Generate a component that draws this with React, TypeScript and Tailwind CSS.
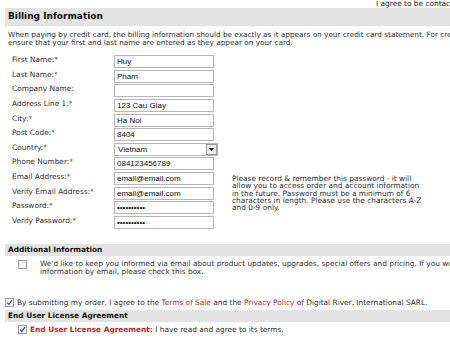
import type { ReactNode } from 'react';

const FONT = "font-['DejaVu_Sans',Verdana,sans-serif]";
const INPUT_FONT = "font-['Liberation_Sans',Arial,sans-serif]";

type Field = { label: string; value?: string; kind?: 'text' | 'password' | 'select' };

const FIELDS: Field[] = [
  { label: 'First Name:*', value: 'Huy' },
  { label: 'Last Name:*', value: 'Pham' },
  { label: 'Company Name:', value: '' },
  { label: 'Address Line 1:*', value: '123 Cau Giay' },
  { label: 'City:*', value: 'Ha Noi' },
  { label: 'Post Code:*', value: '8404' },
  { label: 'Country:*', value: 'Vietnam', kind: 'select' },
  { label: 'Phone Number:*', value: '084123456789' },
  { label: 'Email Address:*', value: 'email@email.com' },
  { label: 'Verify Email Address:*', value: 'email@email.com' },
  { label: 'Password:*', value: 'password12', kind: 'password' },
  { label: 'Verify Password:*', value: 'password12', kind: 'password' },
];

function SectionBar({ children, big }: { children: ReactNode; big?: boolean }) {
  return (
    <div
      className={
        big
          ? 'ml-[5px] flex h-[18px] items-center bg-[#e3e3e3] pl-[3px] text-[9px] font-bold text-[#111]'
          : 'ml-[5px] flex h-[12px] items-center bg-[#e3e3e3] pl-[3px] text-[7.4px] font-bold text-[#111]'
      }
    >
      {children}
    </div>
  );
}

function Check({ checked }: { checked?: boolean }) {
  return (
    <span className="flex h-[9px] w-[9px] shrink-0 items-center justify-center border border-[#a2a2a2] bg-[#f4f4f4]">
      {checked && (
        <svg width="7" height="7" viewBox="0 0 7 7">
          <path d="M1 3.6 L2.8 5.4 L6 1.2" fill="none" stroke="#3b5a9a" strokeWidth="1.3" />
        </svg>
      )}
    </span>
  );
}

function FieldInput({ field }: { field: Field }) {
  if (field.kind === 'select') {
    return (
      <div className="flex h-[13px] w-[167px] items-center border border-[#b7b7b7] bg-white">
        <span className={`${INPUT_FONT} flex-1 pl-[3px] text-[8px] leading-[11px] text-[#111]`}>
          {field.value}
        </span>
        <span className="flex h-[11px] w-[11px] items-center justify-center border border-[#9a9a9a] bg-[#ececec]">
          <svg width="5" height="3" viewBox="0 0 5 3">
            <path d="M0 0 H5 L2.5 3 Z" fill="#111" />
          </svg>
        </span>
      </div>
    );
  }
  return (
    <input
      readOnly
      type={field.kind === 'password' ? 'password' : 'text'}
      value={field.value}
      className={`${INPUT_FONT} h-[13px] w-[100px] border border-[#b7b7b7] bg-white px-[2px] text-[8px] leading-[11px] text-[#111] outline-none`}
    />
  );
}

export default function App() {
  return (
    <div className={`${FONT} h-[354px] w-[450px] overflow-hidden bg-white text-[7.4px] text-[#333]`}>
      <div className="h-[8px] whitespace-nowrap pl-[376px] leading-[8px] text-[#222]">
        I agree to be contacted
      </div>

      <SectionBar big>Billing Information</SectionBar>

      <div className="mt-[5px] whitespace-nowrap pl-[8px] text-[7.3px] leading-[8px]">
        <div>
          When paying by credit card, the billing information should be exactly as it appears on your credit card statement. For credit
        </div>
        <div>ensure that your first and last name are entered as they appear on your card.</div>
      </div>

      <div className="mt-[8px] flex">
        <div className="flex w-[218px] shrink-0 flex-col">
          {FIELDS.map((f) => (
            <div key={f.label} className="flex h-[14.64px] items-start">
              <span className="w-[114px] shrink-0 pl-[12px] leading-[9px]">{f.label}</span>
              <FieldInput field={f} />
            </div>
          ))}
        </div>
        <div className="mt-[120px] w-[206px] pl-[14px] leading-[7.3px]">
          Please record &amp; remember this password - it will allow you to access order and account information in
          the future. Password must be a minimum of 6 characters in length. Please use the characters A-Z and 0-9
          only.
        </div>
      </div>

      <div className="mt-[13px]">
        <SectionBar>Additional Information</SectionBar>
      </div>
      <div className="mt-[4px] flex items-start">
        <span className="ml-[18px]">
          <Check />
        </span>
        <div className="ml-[13px] whitespace-nowrap leading-[8px]">
          <div>
            We'd like to keep you informed via email about product updates, upgrades, special offers and pricing. If you would
          </div>
          <div>information by email, please check this box.</div>
        </div>
      </div>

      <div className="mt-[22px] flex items-center whitespace-nowrap">
        <span className="ml-[5px]">
          <Check checked />
        </span>
        <span className="ml-[3px] leading-[9px]">
          By submitting my order, I agree to the <span className="text-[#b3283a]">Terms of Sale</span> and the{' '}
          <span className="text-[#b3283a]">Privacy Policy</span> of Digital River, International SARL.
        </span>
      </div>

      <div className="mt-[3px]">
        <SectionBar>End User License Agreement</SectionBar>
      </div>
      <div className="mt-[3px] flex items-center whitespace-nowrap">
        <span className="ml-[18px]">
          <Check checked />
        </span>
        <span className="ml-[3px] leading-[9px]">
          <span className="font-bold text-[#d0202a]">End User License Agreement:</span> I have read and agree to its
          terms.
        </span>
      </div>
    </div>
  );
}
